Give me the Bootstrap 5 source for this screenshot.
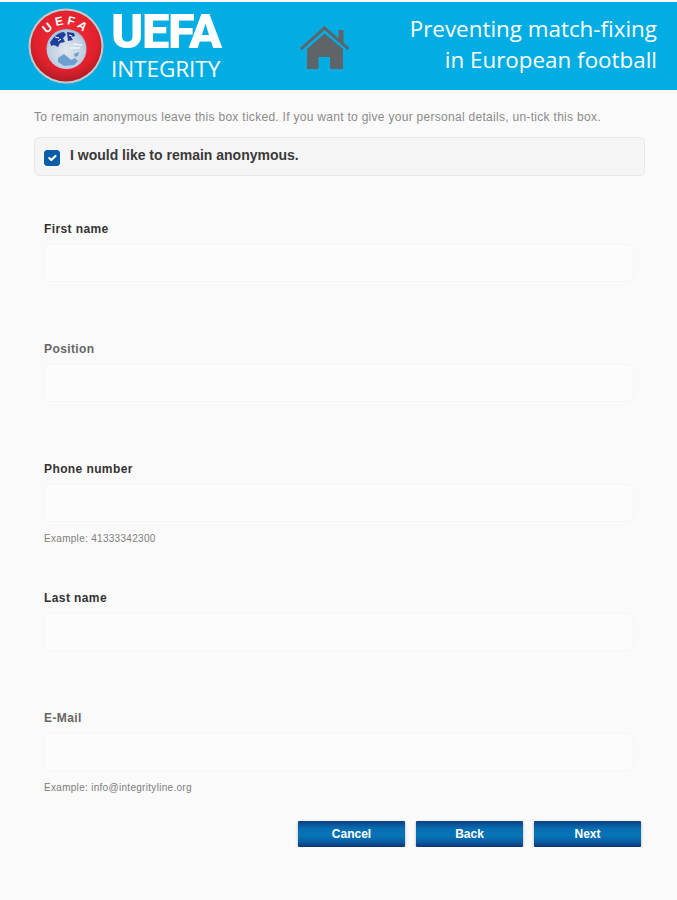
<!DOCTYPE html>
<html lang="en">
<head>
<meta charset="utf-8">
<title>UEFA Integrity</title>
<link rel="stylesheet" href="https://cdn.jsdelivr.net/npm/bootstrap@5.3.0/dist/css/bootstrap.min.css">
<style>
html,body{background:#fafafa;}
body{font-family:"Liberation Sans",Arial,sans-serif;padding-top:2px;color:#333;}
.hdr{height:88px;background:#02ade3;padding:0 20px 0 28px;}
.logo-txt{color:#fff;font-family:"Open Sans",sans-serif;margin-left:7px;margin-top:1px;width:112px;}
.logo-big{font-size:49px;font-weight:900;letter-spacing:-1.5px;display:block;line-height:38px;font-family:Roboto,sans-serif;}
.logo-small{font-size:22.6px;display:block;line-height:22px;margin-top:7px;letter-spacing:-.1px;}
.home-ic{margin-left:76px;margin-top:2px;}
.tagline{color:#fff;font-family:"Open Sans",sans-serif;font-size:22.4px;line-height:31px;text-align:right;margin-top:-4px;}
.wrap{padding:19px 32px 0 34px;}
.intro{font-size:12px;letter-spacing:.29px;color:#8a8a8a;line-height:16px;margin:0 0 12px;}
.anon{background:#f5f5f5;border:1px solid #e9e9e9;border-radius:5px;height:39px;padding:0 9px;gap:10px;margin-bottom:45px;}
.anon .form-check-input{width:16px;height:16px;margin:2px 0 0;background-color:#0a5ea6;border-color:#0a5ea6;border-radius:3px;float:none;flex:none;}
.anon .form-check-label{font-size:14px;font-weight:700;color:#3a3a3a;margin-top:-2px;}
.fields{padding:0 11px 0 10px;}
.fld{margin-bottom:59px;}
.fld.has-help{margin-bottom:44px;}
.fld.last{margin-bottom:26px;}
.fld .form-label{display:block;font-size:12px;letter-spacing:.4px;font-weight:700;line-height:16px;margin:0 0 7px;color:#333;}
.fld .lbl-soft{color:#666;}
.fld .form-control{height:38px;background:#fcfcfc;border:1px solid #f5f5f5;border-radius:6px;}
.hlp{font-size:10px;letter-spacing:.3px;line-height:14px;margin-top:10px;color:#7d7d7d;}
.acts{gap:11px;padding-right:4px;}
.btn-blue{width:107px;height:26px;padding:0;border:0;border-radius:1px;color:#fff;font-size:12px;font-weight:700;line-height:24px;
background:linear-gradient(#0c3f83 0,#0a6bb0 28%,#0675b8 55%,#0a5ea3 80%,#0b3474 100%);box-shadow:0 1px 3px rgba(0,0,0,.3);}
</style>
</head>
<body>
<header class="hdr d-flex align-items-center">
  <svg width="76" height="76" viewBox="0 0 76 76" class="flex-shrink-0" role="img" aria-label="UEFA emblem">
    <defs>
      <radialGradient id="rd" cx=".5" cy=".4" r=".62"><stop offset="0" stop-color="#f2303a"/><stop offset=".72" stop-color="#e0202c"/><stop offset="1" stop-color="#a81c26"/></radialGradient>
      <radialGradient id="gl" cx=".5" cy=".55" r=".6"><stop offset="0" stop-color="#e2e7ec"/><stop offset=".75" stop-color="#bcd0e2"/><stop offset="1" stop-color="#8fb4d8"/></radialGradient>
      <path id="arc" d="M14.500 40 A23.500 23.500 0 0 1 61.500 40"/>
    </defs>
    <circle cx="38" cy="38" r="37.500" fill="#c9c9c9"/>
    <circle cx="38" cy="38" r="35.500" fill="url(#rd)"/>
    <circle cx="38.500" cy="41" r="20" fill="url(#gl)"/>
    <path d="M23 33c4-6 9-9 13-9l2 3-3 3 2 4-5 1-2 4-4-2-3 1c0-3-2-3 0-5z" fill="#1f3f9e"/>
    <path d="M39 24l7 1 1 3-4 1 2 3-5 1z" fill="#24389a"/>
    <path d="M27 29l4 1M30 33l3-2M41 27l3 1" stroke="#fff" stroke-width="1"/>
    <path d="M45 36l9 1M42 40l10 0" stroke="#f0f3f6" stroke-width="1.500"/>
    <path d="M30 50l6-4 7 6 4-2 3 3-4 4-10 1-6-4zM46 46l5-2-1 4-3 1z" fill="#6f9ed0"/>
    <text font-family="Liberation Sans,sans-serif" font-size="12" font-weight="700" fill="#fff" letter-spacing="3" text-anchor="middle"><textPath href="#arc" startOffset="50%">UEFA</textPath></text>
  </svg>
  <div class="logo-txt">
    <span class="logo-big">UEFA</span>
    <span class="logo-small">INTEGRITY</span>
  </div>
  <svg class="home-ic flex-shrink-0" width="52" height="46" viewBox="0 0 52 46" role="img" aria-label="Home">
    <path d="M25.500 2 1 24 3 26 25.500 6 48.500 26 50.500 24 44.500 18.500V6H39.500V14.300Z" fill="#5f6468"/>
    <path d="M25.500 9.500 8 25V45H19.500V33H31V45H44V25Z" fill="#5f6468"/>
  </svg>
  <div class="tagline ms-auto">Preventing match-fixing<br>in European football</div>
</header>
<main class="wrap">
  <p class="intro">To remain anonymous leave this box ticked. If you want to give your personal details, un-tick this box.</p>
  <div class="anon d-flex align-items-center">
    <input class="form-check-input" type="checkbox" id="anon" checked>
    <label class="form-check-label" for="anon">I would like to remain anonymous.</label>
  </div>
  <form class="fields">
    <div class="fld"><label class="form-label" for="f1">First name</label><input class="form-control" id="f1"></div>
    <div class="fld"><label class="form-label lbl-soft" for="f2">Position</label><input class="form-control" id="f2"></div>
    <div class="fld has-help"><label class="form-label" for="f3">Phone number</label><input class="form-control" id="f3"><div class="hlp">Example: 41333342300</div></div>
    <div class="fld"><label class="form-label" for="f4">Last name</label><input class="form-control" id="f4"></div>
    <div class="fld last"><label class="form-label lbl-soft" for="f5">E-Mail</label><input class="form-control" id="f5"><div class="hlp">Example: info@integrityline.org</div></div>
  </form>
  <div class="acts d-flex justify-content-end">
    <button type="button" class="btn btn-blue">Cancel</button>
    <button type="button" class="btn btn-blue">Back</button>
    <button type="button" class="btn btn-blue">Next</button>
  </div>
</main>
<script src="https://cdn.jsdelivr.net/npm/bootstrap@5.3.0/dist/js/bootstrap.bundle.min.js"></script>
</body>
</html>
